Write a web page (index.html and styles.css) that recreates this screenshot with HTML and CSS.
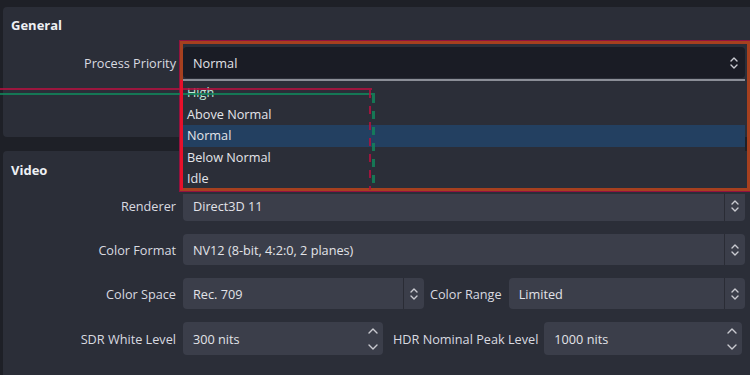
FILE: index.html
```html
<!DOCTYPE html>
<html lang="en">
  <head>
    <meta charset="UTF-8" />
    <title>Settings - Advanced</title>
    <link rel="stylesheet" href="styles.css">
  </head>
  <body>
    <div class="page">
      <section class="panel panel-general">
        <h2 class="panel-title">General</h2>
        <div class="form-row">
          <label class="form-label">Process Priority</label>
          <div class="combo combo-open">
            <span class="combo-value">Normal</span>
            <svg class="arrows" width="10" height="16" viewBox="0 0 10 16">
              <path d="M2 6 L5 3 L8 6 M2 10 L5 13 L8 10" />
            </svg>
          </div>
        </div>

        <ul class="popup">
          <li>High</li>
          <li>Above Normal</li>
          <li class="current">Normal</li>
          <li>Below Normal</li>
          <li>Idle</li>
        </ul>
        <div class="highlight-box"></div>
        <div class="mark mark-red-h"></div>
        <div class="mark mark-green-h"></div>
        <div class="mark mark-red-v"></div>
        <div class="mark mark-dash-red"></div>
        <div class="mark mark-dash-green"></div>
      </section>

      <section class="panel panel-video">
        <h2 class="panel-title">Video</h2>
        <div class="form-grid">
          <label class="form-label">Renderer</label>
          <div class="combo">
            <span class="combo-value">Direct3D 11</span>
            <span class="combo-btn">
              <svg class="arrows" width="10" height="16" viewBox="0 0 10 16">
                <path d="M2 6 L5 3 L8 6 M2 10 L5 13 L8 10" />
              </svg>
            </span>
          </div>

          <label class="form-label">Color Format</label>
          <div class="combo">
            <span class="combo-value">NV12 (8-bit, 4:2:0, 2 planes)</span>
            <span class="combo-btn">
              <svg class="arrows" width="10" height="16" viewBox="0 0 10 16">
                <path d="M2 6 L5 3 L8 6 M2 10 L5 13 L8 10" />
              </svg>
            </span>
          </div>

          <label class="form-label">Color Space</label>
          <div class="pair">
            <div class="combo combo-space">
              <span class="combo-value">Rec. 709</span>
              <span class="combo-btn">
                <svg class="arrows" width="10" height="16" viewBox="0 0 10 16">
                  <path d="M2 6 L5 3 L8 6 M2 10 L5 13 L8 10" />
                </svg>
              </span>
            </div>
            <label class="form-label inline">Color Range</label>
            <div class="combo grow">
              <span class="combo-value">Limited</span>
              <span class="combo-btn">
                <svg class="arrows" width="10" height="16" viewBox="0 0 10 16">
                  <path d="M2 6 L5 3 L8 6 M2 10 L5 13 L8 10" />
                </svg>
              </span>
            </div>
          </div>

          <label class="form-label">SDR White Level</label>
          <div class="pair pair-spin">
            <div class="spin spin-sdr">
              <span class="combo-value">300 nits</span>
              <svg class="spin-arrows" width="12" height="24" viewBox="0 0 12 24">
                <path d="M2 6 L6 2 L10 6 M2 18 L6 22 L10 18" />
              </svg>
            </div>
            <label class="form-label inline hdr">HDR Nominal Peak Level</label>
            <div class="spin grow">
              <span class="combo-value">1000 nits</span>
              <svg class="spin-arrows" width="12" height="24" viewBox="0 0 12 24">
                <path d="M2 6 L6 2 L10 6 M2 18 L6 22 L10 18" />
              </svg>
            </div>
          </div>
        </div>
      </section>
    </div>
  </body>
</html>
```

FILE: styles.css
```css
* {
  margin: 0;
  padding: 0;
  box-sizing: border-box;
}

body {
  font-family: "Open Sans", "Noto Sans", sans-serif;
  font-size: 12.7px;
  color: #e2e3e8;
  background-color: #1e2027;
  width: 750px;
  height: 375px;
  overflow: hidden;
}

.page {
  display: flex;
  flex-direction: column;
  gap: 14px;
  padding-top: 7px;
}

.panel {
  position: relative;
  margin-left: 3px;
  background-color: #2b2e38;
  border-radius: 4px 0 0 4px;
  padding: 0 5px 0 0;
}

.panel-general {
  height: 130px;
}

.panel-video {
  height: 230px;
}

.panel-title {
  font-size: 13px;
  font-weight: 700;
  line-height: 18px;
  padding: 9px 0 0 8px;
  color: #eef0f4;
}

.panel-video .panel-title {
  padding-top: 10px;
}

.form-row {
  display: flex;
  align-items: center;
  gap: 7px;
  margin-top: 13px;
}

.form-label {
  width: 173px;
  text-align: right;
  color: #d9dae0;
  flex-shrink: 0;
}

.form-label.inline {
  width: auto;
  margin: 0 7px 0 6px;
}

.form-label.hdr {
  margin: 0 6px 0 10px;
}

.form-grid {
  display: grid;
  grid-template-columns: 173px 1fr;
  column-gap: 7px;
  row-gap: 13px;
  align-items: center;
  margin-top: 11px;
}

.combo,
.spin {
  display: flex;
  align-items: center;
  height: 31px;
  background-color: #3b3e4a;
  border-radius: 4px;
  padding-left: 10px;
}

.combo-value {
  flex-grow: 1;
  white-space: nowrap;
}

.combo-open {
  flex-grow: 1;
  height: 31px;
  background-color: #1a1c25;
  padding-right: 6px;
}

.combo-btn {
  display: flex;
  align-items: center;
  justify-content: center;
  width: 21px;
  height: 100%;
  border-left: 1px solid #2a2c35;
}

.arrows,
.spin-arrows {
  fill: none;
  stroke: #c9cad0;
  stroke-width: 1.4;
  stroke-linecap: round;
  stroke-linejoin: round;
}

.pair {
  display: flex;
  align-items: center;
}

.combo-space {
  width: 241px;
}

.grow {
  flex-grow: 1;
}

.spin {
  height: 33px;
  padding-right: 4px;
}

.spin-sdr {
  width: 200px;
}

.pair-spin .grow {
  margin-right: 3px;
}

/* dropdown popup of the open combo */
.popup {
  position: absolute;
  left: 180px;
  top: 72px;
  width: 562px;
  list-style: none;
  background-color: #2b2e38;
  border-top: 2px solid #8b8e97;
  padding: 1px 0 4px;
  z-index: 5;
}

.popup li {
  height: 21.5px;
  line-height: 21.5px;
  padding-left: 4px;
  color: #e4e5ea;
}

.popup li:first-child {
  color: #bfe8d8;
}

.popup li.current {
  background-color: #234061;
}

/* annotation marks */
.highlight-box {
  position: absolute;
  left: 177px;
  top: 34px;
  width: 570px;
  height: 150px;
  border: 3px solid #a6401f;
  outline: 1px solid #93123f;
  z-index: 6;
}

.mark {
  position: absolute;
  z-index: 7;
  opacity: 0.85;
}

.mark-red-h {
  left: -3px;
  top: 81px;
  width: 372px;
  height: 2px;
  background-color: #b0123f;
}

.mark-green-h {
  left: -3px;
  top: 86px;
  width: 375px;
  height: 2px;
  background-color: #12845a;
}

.mark-red-v {
  left: 177px;
  top: 73px;
  width: 3px;
  height: 110px;
  background-color: #e8102a;
  opacity: 1;
}

.mark-dash-red {
  left: 366px;
  top: 83px;
  width: 2px;
  height: 100px;
  background: repeating-linear-gradient(#b0123f 0 8px, transparent 8px 16px);
}

.mark-dash-green {
  left: 369px;
  top: 88px;
  width: 3px;
  height: 95px;
  background: repeating-linear-gradient(#12845a 0 8px, transparent 8px 16px);
}
```
